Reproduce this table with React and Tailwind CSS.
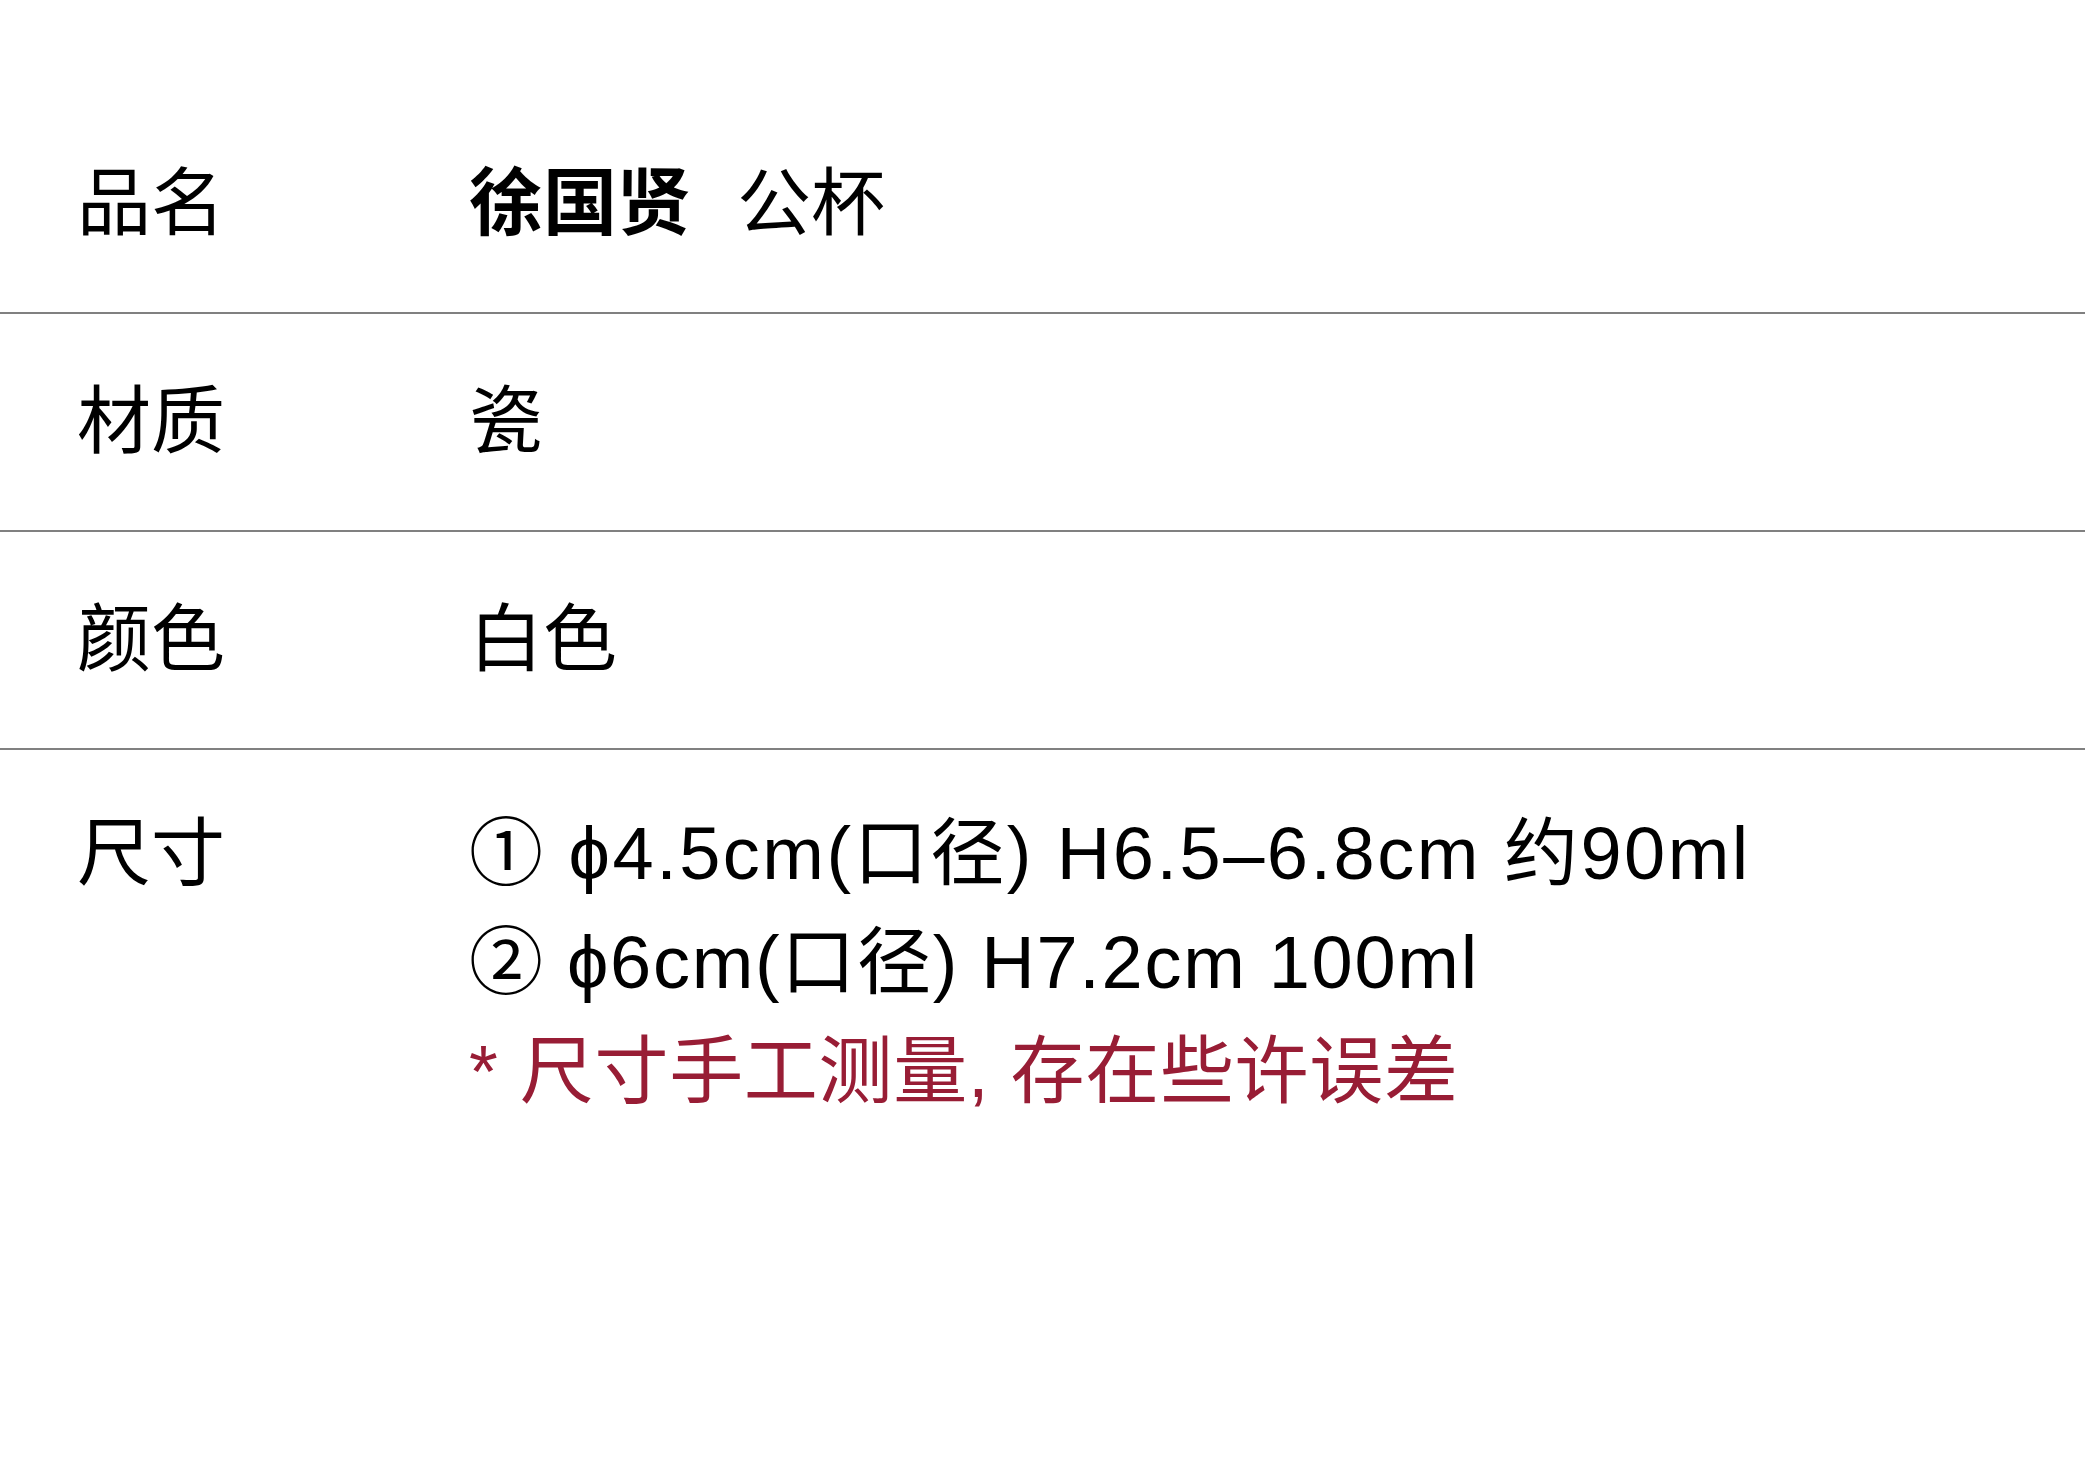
import React from 'react';

const rows = [
    {label: '品名', value: (
        <>
            <span className="font-bold">徐国贤</span>
            <span className="ml-[46px]">公杯</span>
        </>
    )},
    {label: '材质', value: '瓷'},
    {label: '颜色', value: '白色'},
];

export default function App() {
    return (
        <div
            className="w-[2085px] min-h-[1474px] bg-white pt-[96px] text-black text-[74px]"
            style={{fontFamily: '"Liberation Sans", "Noto Sans CJK SC", sans-serif'}}
        >
            {rows.map((row) => (
                <div key={row.label} className="flex items-center h-[218px] border-b-2 border-[#808080]">
                    <div className="w-[469px] pl-[77px] leading-none">{row.label}</div>
                    <div className="leading-none">{row.value}</div>
                </div>
            ))}

            {/* 尺寸 */}
            <div className="flex pt-[49px] leading-[109px]">
                <div className="w-[469px] pl-[77px]">尺寸</div>
                <div className="flex flex-col">
                    <span className="tracking-[2.5px]">① ϕ4.5cm(口径) H6.5–6.8cm 约90ml</span>
                    <span className="tracking-[1.7px]">② ϕ6cm(口径) H7.2cm 100ml</span>
                    <span className="text-[#981d35] tracking-[0.7px]">* 尺寸手工测量, 存在些许误差</span>
                </div>
            </div>
        </div>
    );
}
